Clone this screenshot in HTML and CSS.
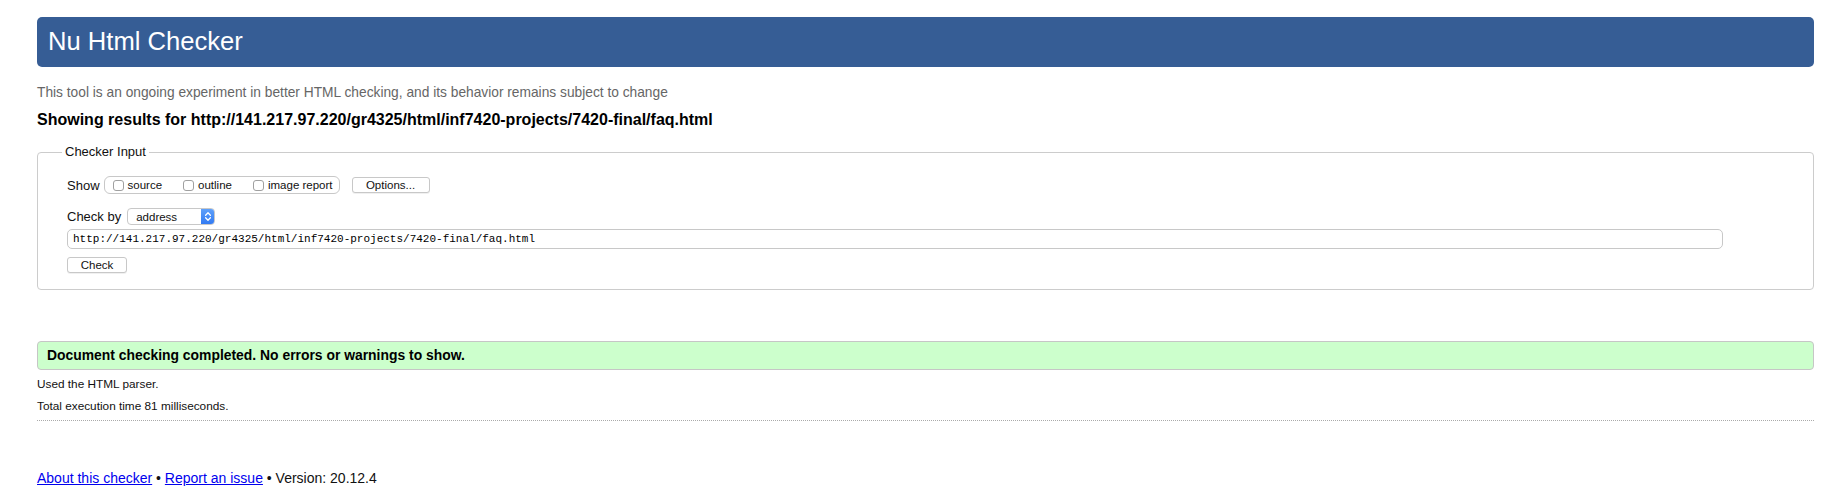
FILE: index.html
```html
<!DOCTYPE html>
<html lang="en">
<head>
<meta charset="utf-8">
<title>Nu Html Checker</title>
<link rel="stylesheet" href="styles.css">
</head>
<body>
<header class="banner"><h1 class="title">Nu Html Checker</h1></header>
<p class="intro">This tool is an ongoing experiment in better HTML checking, and its behavior remains subject to change</p>
<h2 class="showing">Showing results for http://141.217.97.220/gr4325/html/inf7420-projects/7420-final/faq.html</h2>
<form class="form">
  <fieldset class="fs">
    <legend class="legend">Checker Input</legend>
    <div class="row row-show">
      <span class="label">Show</span>
      <span class="group">
        <label class="opt"><input type="checkbox" class="cb">source</label>
        <label class="opt"><input type="checkbox" class="cb">outline</label>
        <label class="opt"><input type="checkbox" class="cb">image report</label>
      </span>
      <button type="button" class="btn btn-options">Options...</button>
    </div>
    <div class="row row-by">
      <span class="label">Check by</span>
      <span class="select"><span class="select-text">address</span><span class="stepper"><svg width="14" height="17" viewBox="0 0 14 17"><path d="M4.6 7.2 L7 4.8 L9.4 7.2" fill="none" stroke="#fff" stroke-width="1.3" stroke-linecap="round" stroke-linejoin="round"/><path d="M4.6 9.8 L7 12.2 L9.4 9.8" fill="none" stroke="#fff" stroke-width="1.3" stroke-linecap="round" stroke-linejoin="round"/></svg></span></span>
    </div>
    <input class="url" type="text" value="http://141.217.97.220/gr4325/html/inf7420-projects/7420-final/faq.html">
    <div class="row row-check"><button type="button" class="btn btn-check">Check</button></div>
  </fieldset>
</form>
<p class="success">Document checking completed. No errors or warnings to show.</p>
<p class="details">Used the HTML parser.</p>
<p class="details">Total execution time 81 milliseconds.</p>
<hr class="rule">
<p class="footer"><a href="#" class="link">About this checker</a> • <a href="#" class="link">Report an issue</a> • Version: 20.12.4</p>
</body>
</html>
```
FILE: styles.css
```css
html, body {
  background: #fff;
}
body {
  margin: 0;
  padding: 17px 25px 0 37px;
  font-family: "Liberation Sans", Arial, Helvetica, sans-serif;
  color: #000;
}
.banner {
  height: 50px;
  background: #365d95;
  border-radius: 5px;
  display: flex;
  align-items: center;
  padding-left: 11px;
}
.title {
  margin: 0;
  font-size: 25.6px;
  font-weight: normal;
  line-height: 1;
  color: #fff;
}
.intro {
  margin: 18px 0 0;
  font-size: 13.75px;
  line-height: 16px;
  color: #666;
}
.showing {
  margin: 10px 0 0;
  font-size: 16px;
  font-weight: bold;
  line-height: 18px;
}
.form {
  margin: 0;
}
.fs {
  margin: 15px 0 0;
  border: 1px solid #cccccc;
  border-radius: 4px;
  padding: 0 24px 16px 24px;
  min-width: 0;
}
.legend {
  padding: 0 3px;
  font-size: 13px;
  line-height: 16px;
  color: #111;
}
.row {
  display: flex;
  align-items: center;
  padding-left: 5px;
}
.row-show {
  height: 18px;
  margin-top: 16px;
}
.label {
  font-size: 13px;
  color: #111;
  margin-right: 4px;
}
.group {
  display: inline-flex;
  align-items: center;
  height: 16px;
  border: 1px solid #c8c8c8;
  border-radius: 6px;
  padding: 0 6px 0 8px;
}
.opt {
  display: inline-flex;
  align-items: center;
  font-size: 11.5px;
  color: #111;
  margin-right: 21px;
}
.opt:last-child {
  margin-right: 0;
}
.cb {
  appearance: none;
  -webkit-appearance: none;
  width: 11px;
  height: 11px;
  margin: 0 4px 0 0;
  border: 1px solid #a0a0a0;
  border-radius: 3px;
  background: #fff;
}
.btn {
  height: 16px;
  padding: 0;
  background: #fff;
  border: 1px solid #c8c8c8;
  border-radius: 3px;
  box-shadow: 0 1px 0 rgba(0, 0, 0, 0.06);
  font-family: "Liberation Sans", Arial, sans-serif;
  font-size: 11.5px;
  line-height: 14px;
  color: #111;
}
.btn-options {
  width: 78px;
  margin-left: 12px;
}
.row-by {
  height: 17px;
  margin-top: 14px;
}
.row-by .label {
  margin-right: 6px;
}
.select {
  display: inline-flex;
  align-items: center;
  width: 88px;
  height: 17px;
  box-sizing: border-box;
  border: 1px solid #c8c8c8;
  border-radius: 4px;
  overflow: hidden;
  background: #fff;
}
.select-text {
  font-size: 11.5px;
  color: #111;
  padding-left: 8px;
}
.stepper {
  margin-left: auto;
  width: 14px;
  height: 17px;
  display: flex;
  align-items: center;
  justify-content: center;
  background: linear-gradient(#62a3fb, #2f78f2);
  border-radius: 0 4px 4px 0;
  margin-right: -1px;
}
.url {
  display: block;
  box-sizing: border-box;
  width: calc(100% - 71px);
  height: 20px;
  margin: 4px 0 0 5px;
  padding: 0 0 0 5px;
  border: 1px solid #c8c8c8;
  border-radius: 5px;
  font-family: "Liberation Mono", "DejaVu Sans Mono", monospace;
  font-size: 11px;
  color: #000;
  background: #fff;
  outline: none;
}
.row-check {
  margin-top: 8px;
}
.btn-check {
  width: 60px;
}
.success {
  margin: 51px 0 0;
  box-sizing: border-box;
  height: 29px;
  padding: 0 9px;
  line-height: 27px;
  background: #ccffcc;
  border: 1px solid #c6c6c6;
  border-radius: 4px;
  font-size: 13.9px;
  font-weight: bold;
}
.details {
  margin: 6px 0 0;
  font-size: 11.8px;
  line-height: 16px;
  color: #111;
}
.rule {
  margin: 6px 0 0;
  height: 0;
  border: 0;
  border-top: 1px dotted #aaaaaa;
}
.footer {
  margin: 48px 0 0;
  font-size: 14px;
  line-height: 18px;
  color: #111;
}
.link {
  color: #0000ee;
  text-decoration: underline;
}
```
